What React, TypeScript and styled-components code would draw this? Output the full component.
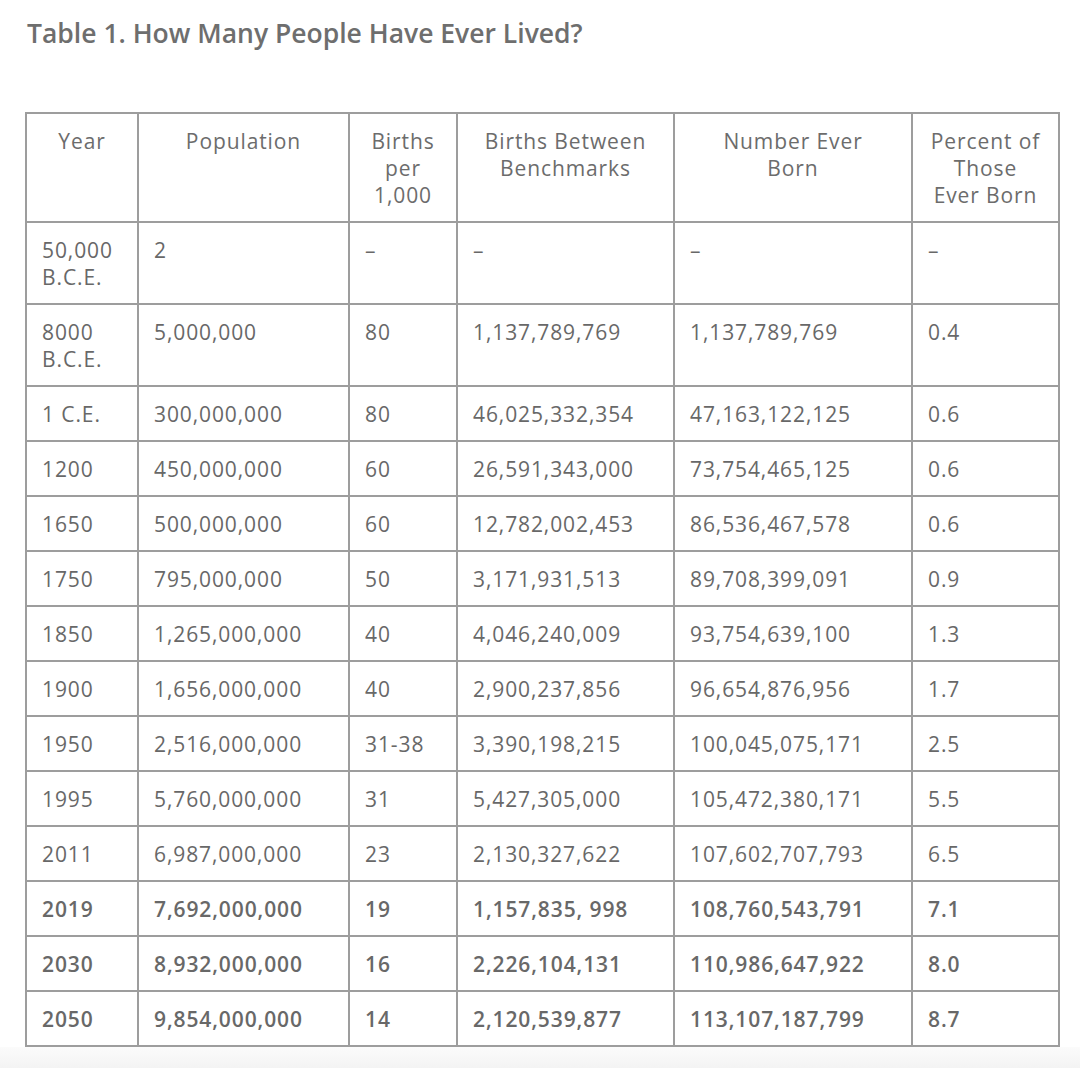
import React from "react";
import styled, { createGlobalStyle } from "styled-components";

const Global = createGlobalStyle`
  html, body { margin: 0; padding: 0; background: #ffffff; }
  body { font-family: "Open Sans", "Noto Sans", sans-serif; color: #6a6a6a; }
`;

const Page = styled.div`
  width: 1080px;
  min-height: 1068px;
  display: flex;
  flex-direction: column;
  background: #ffffff;
`;

const Content = styled.div`
  padding: 14px 22px 0 25px;
`;

const Title = styled.h1`
  margin: 0 0 0 2px;
  font-size: 26.5px;
  line-height: 38px;
  font-weight: 600;
  color: #6e6e6e;
  letter-spacing: 0;
`;

const Table = styled.table`
  margin-top: 60px;
  width: 1033px;
  border-collapse: collapse;
  table-layout: fixed;
  border: 2px solid #9d9d9d;
`;

const HeadCell = styled.th`
  border: 2px solid #9d9d9d;
  padding: 14px 4px 12px;
  font-size: 21px;
  line-height: 27px;
  letter-spacing: 0.9px;
  font-weight: 400;
  color: #6c6c6c;
  text-align: center;
  vertical-align: top;
`;

const Cell = styled.td<{ $bold?: boolean }>`
  border: 2px solid #9d9d9d;
  padding: 14px 6px 12px 15px;
  font-size: 21px;
  line-height: 27px;
  letter-spacing: 0.9px;
  font-weight: ${(p) => (p.$bold ? 600 : 400)};
  color: #686868;
  text-align: left;
  vertical-align: top;
  white-space: nowrap;
`;

const Footer = styled.div`
  flex: 1;
  min-height: 22px;
  background: linear-gradient(#fbfbfb, #f3f3f3);
`;

const widths = [112, 211, 108, 217, 238, 147];

const headers: React.ReactNode[] = [
  "Year",
  "Population",
  <>Births<br />per<br />1,000</>,
  <>Births Between<br />Benchmarks</>,
  <>Number Ever<br />Born</>,
  <>Percent of<br />Those<br />Ever Born</>,
];

type Row = { cells: React.ReactNode[]; bold?: boolean };

const rows: Row[] = [
  { cells: [<>50,000<br />B.C.E.</>, "2", "–", "–", "–", "–"] },
  { cells: [<>8000<br />B.C.E.</>, "5,000,000", "80", "1,137,789,769", "1,137,789,769", "0.4"] },
  { cells: ["1 C.E.", "300,000,000", "80", "46,025,332,354", "47,163,122,125", "0.6"] },
  { cells: ["1200", "450,000,000", "60", "26,591,343,000", "73,754,465,125", "0.6"] },
  { cells: ["1650", "500,000,000", "60", "12,782,002,453", "86,536,467,578", "0.6"] },
  { cells: ["1750", "795,000,000", "50", "3,171,931,513", "89,708,399,091", "0.9"] },
  { cells: ["1850", "1,265,000,000", "40", "4,046,240,009", "93,754,639,100", "1.3"] },
  { cells: ["1900", "1,656,000,000", "40", "2,900,237,856", "96,654,876,956", "1.7"] },
  { cells: ["1950", "2,516,000,000", "31-38", "3,390,198,215", "100,045,075,171", "2.5"] },
  { cells: ["1995", "5,760,000,000", "31", "5,427,305,000", "105,472,380,171", "5.5"] },
  { cells: ["2011", "6,987,000,000", "23", "2,130,327,622", "107,602,707,793", "6.5"] },
  { cells: ["2019", "7,692,000,000", "19", "1,157,835, 998", "108,760,543,791", "7.1"], bold: true },
  { cells: ["2030", "8,932,000,000", "16", "2,226,104,131", "110,986,647,922", "8.0"], bold: true },
  { cells: ["2050", "9,854,000,000", "14", "2,120,539,877", "113,107,187,799", "8.7"], bold: true },
];

export default function App() {
  return (
    <Page>
      <Global />
      <Content>
        <Title>Table 1. How Many People Have Ever Lived?</Title>
        <Table>
          <colgroup>
            {widths.map((w, i) => (
              <col key={i} style={{ width: w }} />
            ))}
          </colgroup>
          <thead>
            <tr>
              {headers.map((h, i) => (
                <HeadCell key={i}>{h}</HeadCell>
              ))}
            </tr>
          </thead>
          <tbody>
            {rows.map((r, i) => (
              <tr key={i}>
                {r.cells.map((c, j) => (
                  <Cell key={j} $bold={r.bold}>
                    {c}
                  </Cell>
                ))}
              </tr>
            ))}
          </tbody>
        </Table>
      </Content>
      <Footer />
    </Page>
  );
}
